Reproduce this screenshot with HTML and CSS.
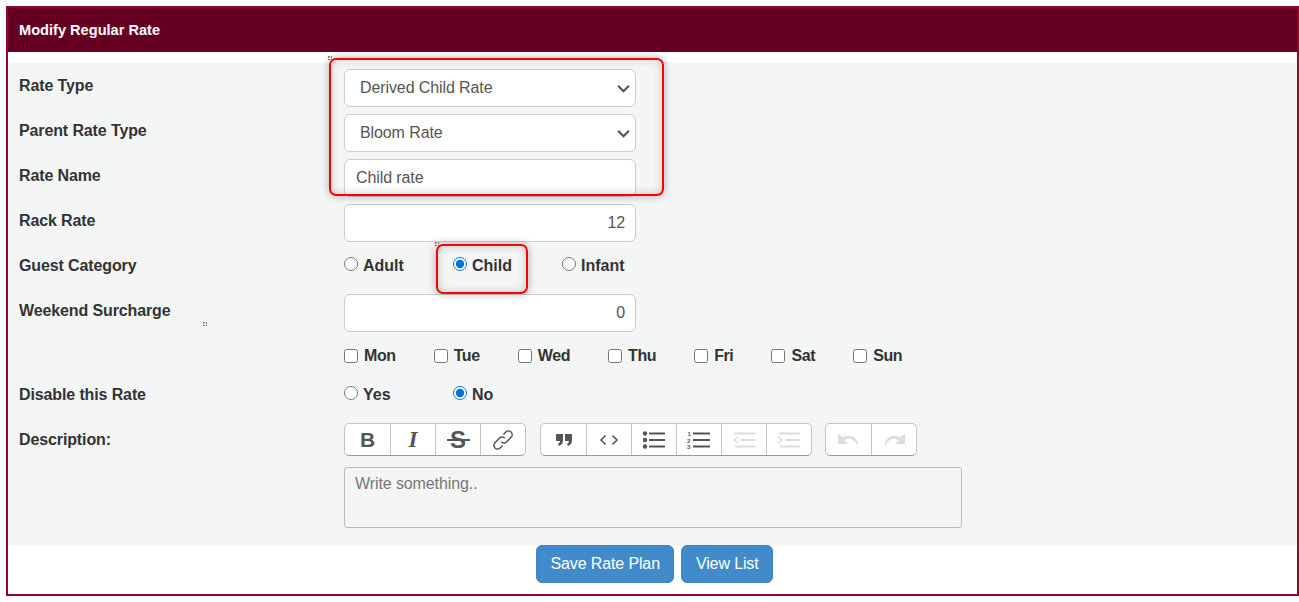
FILE: index.html
```html
<!DOCTYPE html>
<html>

<head>
  <meta charset="utf-8">
  <title>Modify Regular Rate</title>
  <link rel="stylesheet" href="styles.css">
</head>

<body>
  <div class="panel">
    <div class="panel-head">Modify Regular Rate</div>
    <form class="panel-form">
      <div class="form-body">
        <div class="row">
          <label class="row-label">Rate Type</label>
          <div class="select-wrap">
            <select class="control control-select"><option>Derived Child Rate</option></select>
            <svg class="select-arrow" viewBox="0 0 12 8"><path d="M1 1.500l5 5 5-5" /></svg>
          </div>
        </div>
        <div class="row">
          <label class="row-label">Parent Rate Type</label>
          <div class="select-wrap">
            <select class="control control-select"><option>Bloom Rate</option></select>
            <svg class="select-arrow" viewBox="0 0 12 8"><path d="M1 1.500l5 5 5-5" /></svg>
          </div>
        </div>
        <div class="row">
          <label class="row-label">Rate Name</label>
          <input class="control" type="text" value="Child rate">
        </div>
        <div class="row">
          <label class="row-label">Rack Rate</label>
          <input class="control control-num" type="text" value="12">
        </div>
        <div class="row">
          <label class="row-label">Guest Category</label>
          <div class="choices">
            <label class="choice"><input type="radio" name="guest">Adult</label>
            <label class="choice"><input type="radio" name="guest" checked>Child</label>
            <label class="choice"><input type="radio" name="guest">Infant</label>
          </div>
        </div>
        <div class="row">
          <label class="row-label">Weekend Surcharge</label>
          <input class="control control-num" type="text" value="0">
        </div>
        <div class="row row-days">
          <span class="row-label"></span>
          <div class="days">
            <label class="day"><input type="checkbox">Mon</label>
            <label class="day"><input type="checkbox">Tue</label>
            <label class="day"><input type="checkbox">Wed</label>
            <label class="day"><input type="checkbox">Thu</label>
            <label class="day"><input type="checkbox">Fri</label>
            <label class="day"><input type="checkbox">Sat</label>
            <label class="day"><input type="checkbox">Sun</label>
          </div>
        </div>
        <div class="row">
          <label class="row-label">Disable this Rate</label>
          <div class="choices">
            <label class="choice"><input type="radio" name="disable">Yes</label>
            <label class="choice"><input type="radio" name="disable" checked>No</label>
          </div>
        </div>
        <div class="row row-editor">
          <label class="row-label">Description:</label>
          <div class="editor">
            <div class="toolbar">
              <div class="tool-group">
                <button type="button" class="tool tool-b">B</button>
                <button type="button" class="tool tool-i">I</button>
                <button type="button" class="tool tool-s">S</button>
                <button type="button" class="tool">
                  <svg class="icon-line" width="22" height="22" viewBox="0 0 24 24"><path d="M10 14a4 4 0 0 0 5.800.2l5-5.200a4 4 0 0 0-5.700-5.700l-2.600 2.700M14 10a4 4 0 0 0-5.800-.2l-5 5.200a4 4 0 0 0 5.700 5.700l2.600-2.700" /></svg>
                </button>
              </div>
              <div class="tool-group">
                <button type="button" class="tool">
                  <svg class="icon-fill" width="18" height="14" viewBox="0 0 18 14"><path d="M1 1h7v6.500q0 4-4 5.500L3 11q2-.8 2-3H1zM10 1h7v6.500q0 4-4 5.500l-1-2q2-.8 2-3h-4z" /></svg>
                </button>
                <button type="button" class="tool">
                  <svg class="icon-line" width="20" height="12" viewBox="0 0 20 12"><path d="M6.500 1.500L2 6l4.500 4.500M13.500 1.500L18 6l-4.500 4.500" /></svg>
                </button>
                <button type="button" class="tool">
                  <svg class="icon-fill" width="24" height="18" viewBox="0 0 24 18"><circle cx="3" cy="2.500" r="2.200" /><circle cx="3" cy="9" r="2.200" /><circle cx="3" cy="15.500" r="2.200" /><rect x="7" y="1.500" width="16" height="2" /><rect x="7" y="8" width="16" height="2" /><rect x="7" y="14.500" width="16" height="2" /></svg>
                </button>
                <button type="button" class="tool">
                  <svg class="icon-fill" width="24" height="18" viewBox="0 0 24 18"><text class="num" x="0.500" y="5">1</text><text class="num" x="0" y="11.500">2</text><text class="num" x="0" y="18">3</text><rect x="6" y="1.500" width="17" height="2" /><rect x="6" y="8" width="17" height="2" /><rect x="6" y="14.500" width="17" height="2" /></svg>
                </button>
                <button type="button" class="tool tool-off">
                  <svg class="icon-fill" width="24" height="18" viewBox="0 0 24 18"><rect x="2" y="1.500" width="21" height="2" /><rect x="9" y="8" width="14" height="2" /><rect x="3" y="14.500" width="20" height="2" /><path d="M6.500 5L6.500 6.500 3.500 9l3 2.500V13L1 9z" /></svg>
                </button>
                <button type="button" class="tool tool-off">
                  <svg class="icon-fill" width="24" height="18" viewBox="0 0 24 18"><rect x="2" y="1.500" width="21" height="2" /><rect x="9" y="8" width="14" height="2" /><rect x="3" y="14.500" width="20" height="2" /><path d="M1 5v1.500L4 9l-3 2.500V13l5.500-4z" /></svg>
                </button>
              </div>
              <div class="tool-group tool-group-last">
                <button type="button" class="tool tool-off">
                  <svg class="icon-fill" width="24" height="16" viewBox="0 0 24 16"><path d="M1 2v10h10L7.500 8.500C11 5.500 17 6 21 14 21.500 7 15 1 6 5z" /></svg>
                </button>
                <button type="button" class="tool tool-off">
                  <svg class="icon-fill" width="24" height="16" viewBox="0 0 24 16"><path d="M23 2v10H13l3.500-3.500C13 5.500 7 6 3 14 2.500 7 9 1 18 5z" /></svg>
                </button>
              </div>
            </div>
            <textarea class="editor-text" placeholder="Write something.."></textarea>
          </div>
        </div>
      </div>
      <div class="form-actions">
        <button type="button" class="btn">Save Rate Plan</button>
        <button type="button" class="btn">View List</button>
      </div>
    </form>
    <div class="mark mark-fields"></div>
    <div class="mark mark-child"></div>
    <span class="speck speck-a"></span>
    <span class="speck speck-b"></span>
    <span class="speck speck-c"></span>
  </div>
</body>

</html>
```

FILE: styles.css
```css
* {
  box-sizing: border-box;
}

body {
  margin: 6px 0 0 6px;
  background: #fff;
  font-family: "Liberation Sans", Arial, sans-serif;
  font-size: 16px;
  color: #333;
}

.panel {
  position: relative;
  width: 1293px;
  height: 590px;
  border: 2px solid #8b0a2e;
}

.panel-head {
  height: 44px;
  padding: 0 11px;
  background: #660022;
  color: #fff;
  font-size: 14.6px;
  font-weight: bold;
  line-height: 44px;
}

.panel-form {
  padding-top: 11px;
}

.form-body {
  height: 482px;
  padding-top: 6px;
  background: #f4f6f6;
}

.row {
  display: flex;
  height: 45px;
}

.row-days {
  height: 39px;
}

.row-editor {
  height: auto;
}

.row-label {
  flex: none;
  width: 336px;
  padding: 8px 0 0 11px;
  font-weight: bold;
  letter-spacing: -.12px;
  line-height: 18px;
}

.select-wrap {
  position: relative;
  height: 38px;
}

.control {
  display: block;
  width: 292px;
  height: 38px;
  padding: 0 11px;
  border: 1px solid #ccc;
  border-radius: 6px;
  background: #fff;
  color: #555;
  font: inherit;
  letter-spacing: -.1px;
  outline: none;
}

.control-select {
  padding: 0 15px 2px;
  appearance: none;
}

.control-num {
  padding-right: 10px;
  text-align: right;
}

.select-arrow {
  position: absolute;
  top: 15px;
  right: 6px;
  width: 13px;
  height: 9px;
  fill: none;
  stroke: #555;
  stroke-width: 2;
  pointer-events: none;
}

.choices {
  display: flex;
  padding-top: 8px;
}

.choice {
  display: flex;
  align-items: center;
  width: 109px;
  height: 18px;
  font-weight: bold;
}

.choice input {
  flex: none;
  width: 14px;
  height: 14px;
  margin: 0 5px 4px 0;
  accent-color: #0075d6;
}

.days {
  display: flex;
  gap: 38px;
  padding-top: 8px;
}

.day {
  display: flex;
  align-items: center;
  height: 18px;
  font-weight: bold;
  letter-spacing: -.4px;
}

.day input {
  flex: none;
  width: 14px;
  height: 14px;
  margin: 0 6px 0 0;
}

.editor {
  width: 618px;
}

.toolbar {
  display: flex;
  gap: 14px;
}

.tool-group {
  display: flex;
  height: 33px;
  border: 1px solid #c4c4c4;
  border-bottom-color: #999;
  border-radius: 5px;
  background: #fff;
}

.tool-group-last {
  margin-left: -1px;
}

.tool {
  display: flex;
  align-items: center;
  justify-content: center;
  width: 45px;
  padding: 0;
  border: 0;
  border-left: 1px solid #c4c4c4;
  background: none;
  color: #555;
  font-family: "Liberation Sans", Arial, sans-serif;
  font-size: 21px;
  font-weight: bold;
}

.tool:first-child {
  border-left: 0;
}

.tool-i {
  font-family: "Liberation Serif", serif;
  font-size: 23px;
  font-style: italic;
}

.tool-s {
  position: relative;
  font-size: 24px;
}

.tool-s::after {
  content: "";
  position: absolute;
  left: 11px;
  right: 10px;
  top: 15px;
  height: 2px;
  background: #555;
}

.tool-off svg {
  fill: #ddd;
}

.icon-line {
  fill: none;
  stroke: #555;
  stroke-width: 1.600;
}

.icon-fill {
  fill: #555;
}

.num {
  font-size: 6px;
  font-weight: bold;
}

.editor-text {
  display: block;
  width: 618px;
  height: 61px;
  margin-top: 11px;
  padding: 7px 10px;
  border: 1px solid #bbb;
  border-radius: 3px;
  background: #f4f6f6;
  color: #555;
  font: inherit;
  letter-spacing: -.1px;
  resize: none;
  outline: none;
}

.editor-text::placeholder {
  color: #777;
}

.form-actions {
  display: flex;
  justify-content: center;
  gap: 7px;
  padding-left: 4px;
}

.btn {
  height: 38px;
  padding: 0 13.500px;
  border: 1px solid #3d85c4;
  border-radius: 6px;
  background: #428bca;
  color: #fff;
  font: inherit;
  letter-spacing: -.12px;
}

.mark {
  position: absolute;
  border: 2px solid #f00;
  border-radius: 7px;
  box-shadow: 0 0 8px rgba(0, 0, 0, .3), inset 0 0 9px rgba(0, 0, 0, .2);
  pointer-events: none;
}

.mark-fields {
  left: 321px;
  top: 50px;
  width: 335px;
  height: 138px;
}

.mark-child {
  left: 428px;
  top: 236px;
  width: 92px;
  height: 50px;
}

.speck {
  position: absolute;
  width: 4px;
  height: 4px;
  border: 1px dotted #777;
}

.speck-a {
  left: 320px;
  top: 48px;
}

.speck-b {
  left: 427px;
  top: 234px;
}

.speck-c {
  left: 195px;
  top: 314px;
}
```
